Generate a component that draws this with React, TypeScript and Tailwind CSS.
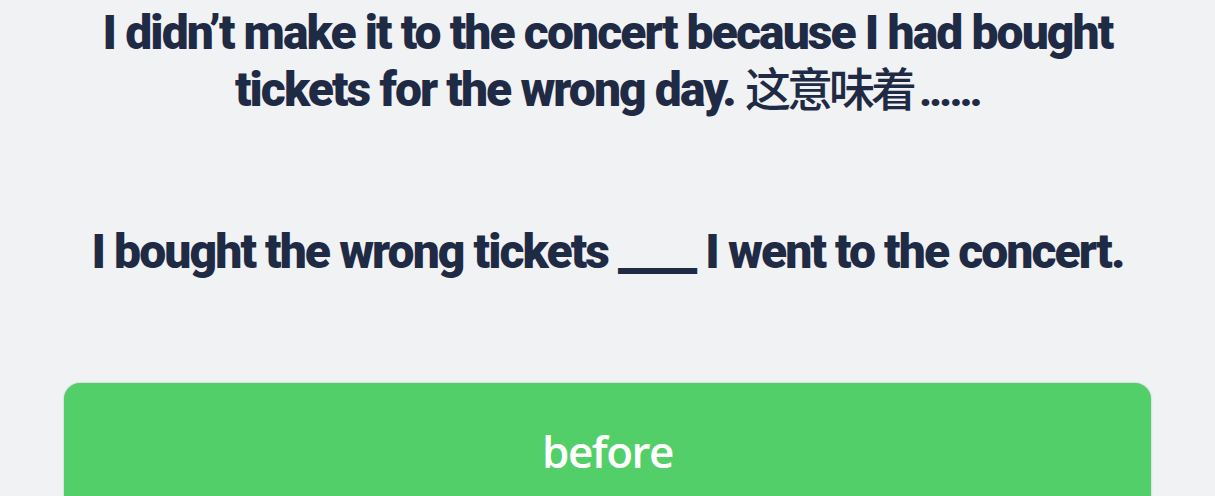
import React from "react";

export default function App() {
  const heading = "font-['Roboto','Noto_Sans_CJK_SC',sans-serif] text-[48px] leading-[57px] font-black text-center text-[#1f2a44] tracking-[-1.9px]";
  return (
    <div className="min-h-screen bg-[#f1f2f4] flex flex-col items-center px-16 pt-[4px]">
      <p className={heading}>
        I didn’t make it to the concert because I had bought tickets for the wrong day.{" "}
        <span className="font-['Noto_Sans_CJK_SC',sans-serif] font-medium text-[46px] leading-[0px] tracking-[-4px]">这意味着</span>
        <span className="text-[42px] leading-[0px] tracking-[-2px] ml-[6px]">……</span>
      </p>
      <p className={heading + " mt-[105px]"}>
        I bought the wrong tickets ____ I went to the concert.
      </p>
      <div className="mt-[103px] w-full h-[136px] rounded-2xl bg-[#52cf68] shadow-[0_0_2px_rgba(0,0,0,0.25)] flex items-center justify-center">
        <span className="font-['Open_Sans',sans-serif] font-semibold text-[44px] tracking-[-1.5px] text-white">before</span>
      </div>
    </div>
  );
}
